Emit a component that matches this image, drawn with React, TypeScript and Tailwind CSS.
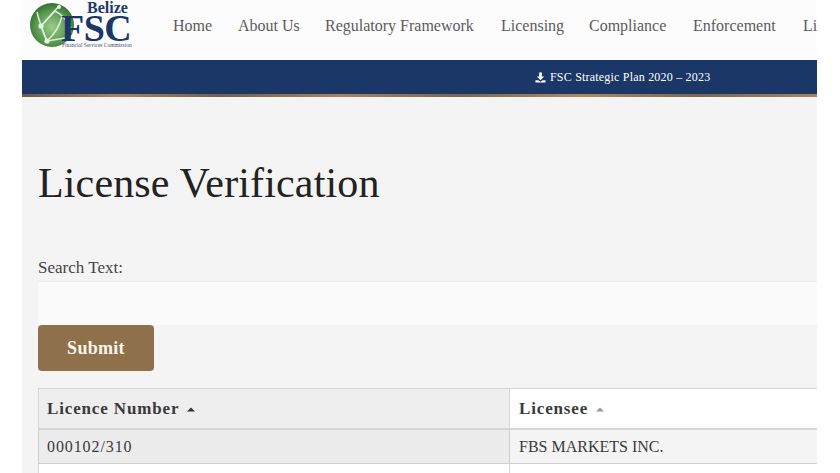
import React from "react";

const serif = { fontFamily: '"Liberation Serif", serif' };

function Globe() {
  return (
    <svg width="45" height="46" viewBox="0 0 45 46" className="absolute left-[7px] top-[2px]">
      <defs>
        <radialGradient id="g" cx="0.5" cy="0.55" r="0.6">
          <stop offset="0" stopColor="#9ccb8c" />
          <stop offset="0.6" stopColor="#5a9a50" />
          <stop offset="1" stopColor="#2a662b" />
        </radialGradient>
      </defs>
      <circle cx="23" cy="23" r="22" fill="url(#g)" />
      <g stroke="#dcefd6" strokeWidth="1.5" fill="none">
        <path d="M12 24 L30 4" />
        <path d="M12 24 L26 9 Q36 14 42 26" />
        <path d="M12 24 L18 39 L36 36" />
        <path d="M18 39 Q30 28 33 14" />
        <path d="M8 10 Q12 26 18 39" />
      </g>
      <circle cx="12" cy="24" r="2.6" fill="#e8f5e4" />
      <circle cx="18" cy="39" r="2.6" fill="#e8f5e4" />
      <circle cx="30" cy="5" r="2" fill="#e8f5e4" />
    </svg>
  );
}

function Caret({ color }: { color: string }) {
  return (
    <svg width="8" height="5" viewBox="0 0 8 5" className="ml-[8px] mt-[1px]">
      <path d="M0 4.5 L4 0.5 L8 4.5 Z" fill={color} />
    </svg>
  );
}

const nav: [string, string][] = [
  ["Home", "w-[65px]"],
  ["About Us", "w-[87px]"],
  ["Regulatory Framework", "w-[176px]"],
  ["Licensing", "w-[88px]"],
  ["Compliance", "w-[104px]"],
  ["Enforcement", "w-[110px]"],
  ["Li", "w-[14px]"],
];

export default function App() {
  return (
    <div className="w-[840px] h-[473px] bg-white overflow-hidden" style={serif}>
      <div className="ml-[22px] w-[795px] h-[473px] bg-[#f4f4f4] overflow-hidden flex flex-col">
        <header className="h-[60px] shrink-0 bg-[#fcfcfc] flex items-center overflow-hidden">
          <div className="relative w-[151px] h-[50px] shrink-0 -mt-[10px]">
            <Globe />
            <span className="absolute left-[65px] top-[2px] text-[#1d3a6e] text-[16px] leading-[12px] font-bold">Belize</span>
            <span className="absolute left-[39px] top-[15px] text-[#1a3768] text-[38px] leading-[26px] font-bold tracking-[-0.5px]">FSC</span>
            <span className="absolute left-[40px] top-[42px] text-[#3c5070] text-[5.5px] leading-[6px] whitespace-nowrap">Financial Services Commission</span>
          </div>
          <nav className="flex text-[#5b5b5b] text-[16px] leading-[20px] whitespace-nowrap -mt-[9px]">
            {nav.map(([n, w]) => (
              <span key={n} className={`${w} shrink-0`}>{n}</span>
            ))}
          </nav>
        </header>
        <div className="h-[34px] shrink-0 bg-[#1a3768] flex items-center pl-[513px] text-white text-[12px] tracking-[0.2px]">
          <svg width="11" height="11" viewBox="0 0 12 12" className="mr-[4px]">
            <path d="M4.5 0.5 H7.5 V5 H10 L6 9 L2 5 H4.5 Z M0.5 9 H3.5 L6 10.5 L8.5 9 H11.5 V11.5 H0.5 Z" fill="#fff" />
          </svg>
          <span>FSC Strategic Plan 2020 – 2023</span>
        </div>
        <div className="h-[3px] shrink-0 bg-[linear-gradient(90deg,#6f5a48,#a8845a_12%,#75604c_25%,#a9845a_40%,#7b6650_55%,#b08a5c_70%,#7c674f_85%,#a8845a)]" />
        <main className="pl-[16px] flex flex-col">
          <h1 className="mt-[61px] text-[#222] text-[42px] leading-[50px] tracking-[0.15px]">License Verification</h1>
          <label className="mt-[49px] text-[#444] text-[17px] leading-[22px]">Search Text:</label>
          <div className="mt-[2px] h-[44px] bg-[#fafafa] border-t border-[#ececec]" />
          <button className="w-[116px] h-[46px] rounded-[4px] bg-[#8e704a] text-[#fbf6ec] text-[18px] font-bold tracking-[0.3px]">Submit</button>
          <div className="mt-[17px] grid grid-cols-[472px_1fr] text-[#3a3a3a]">
            <div className="h-[42px] bg-[#eeeeee] border border-[#d6d6d6] border-b-2 flex items-center pl-[8px] text-[17px] font-bold tracking-[0.85px]">
              Licence Number
              <Caret color="#333" />
            </div>
            <div className="h-[42px] bg-white border-t border-[#d6d6d6] border-b-2 flex items-center pl-[9px] text-[17px] font-bold tracking-[0.85px]">
              Licensee
              <Caret color="#999" />
            </div>
            <div className="h-[34px] bg-[#ececec] border-l border-r border-b border-[#cfcfcf] flex items-center pl-[8px] text-[16px] tracking-[0.9px]">000102/310</div>
            <div className="h-[34px] bg-[#f4f4f4] border-b border-[#cfcfcf] flex items-center pl-[9px] text-[16px]">FBS MARKETS INC.</div>
            <div className="h-[12px] bg-white border-l border-r border-[#d6d6d6]" />
            <div className="h-[12px] bg-white" />
          </div>
        </main>
      </div>
    </div>
  );
}
